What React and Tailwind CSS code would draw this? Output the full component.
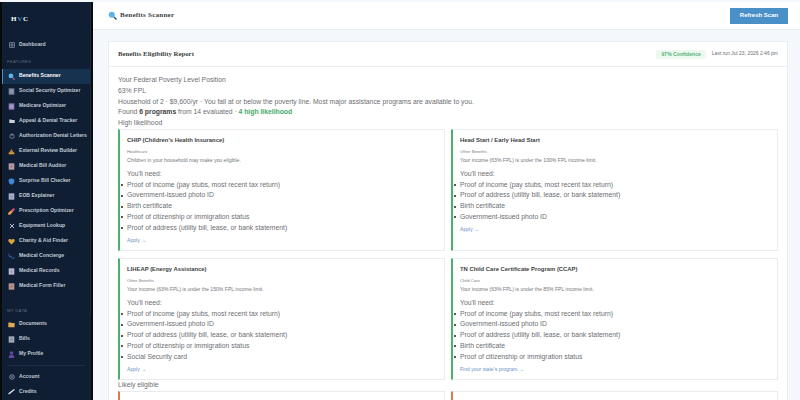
const SANS = "font-['Liberation_Sans',Arial,sans-serif]";

const Box = ({ fill, line }) => (
    <svg viewBox="0 0 10 10" className="w-[7px] h-[7px]">
        <rect x="1" y="0.5" width="8" height="9" fill={fill} />
        <path d="M2.5 3h5M2.5 5h5M2.5 7h5" stroke={line} strokeWidth="0.8" />
    </svg>
);

const icons = {
    grid: (
        <svg viewBox="0 0 10 10" className="w-[6px] h-[6px]" fill="none" stroke="#aab4c0" strokeWidth="1">
            <path d="M1 1h8v8H1zM1 5h8M5 1v8" />
        </svg>
    ),
    search: (
        <svg viewBox="0 0 10 10" className="w-[7px] h-[7px]">
            <circle cx="4.2" cy="4.2" r="3.4" fill="#5fb4e8" />
            <path d="M6.6 6.6 9.4 9.4" stroke="#c46bb0" strokeWidth="1.6" />
        </svg>
    ),
    chart: <Box fill="#77839a" line="#a3adbc" />,
    clipboard: <Box fill="#8d78b5" line="#c9bedc" />,
    folder: (
        <svg viewBox="0 0 10 10" className="w-[6px] h-[6px]">
            <path d="M0.5 2.5h3.5l1 1h4.5v5h-9z" fill="#c9d1da" />
        </svg>
    ),
    power: (
        <svg viewBox="0 0 10 10" className="w-[6px] h-[6px]" fill="none" stroke="#aab4c0" strokeWidth="1">
            <circle cx="5" cy="5.5" r="3.6" />
            <path d="M5 1v4" />
        </svg>
    ),
    scale: (
        <svg viewBox="0 0 10 10" className="w-[7px] h-[7px]">
            <path d="M1 7.5 5 1l4 6.5z" fill="#a8783c" />
            <rect x="1" y="6.5" width="8" height="2.5" fill="#d39a3e" />
        </svg>
    ),
    bill: <Box fill="#c5a3ad" line="#7d6a78" />,
    shield: (
        <svg viewBox="0 0 10 10" className="w-[7px] h-[7px]">
            <path d="M5 0.5 9 2v3.5C9 7.5 7 9 5 9.7 3 9 1 7.5 1 5.5V2z" fill="#3f86d6" />
        </svg>
    ),
    page: <Box fill="#aeb4d0" line="#8089a8" />,
    pill: (
        <svg viewBox="0 0 10 10" className="w-[7px] h-[7px]">
            <path d="M2 8 8 2" stroke="#d8527c" strokeWidth="3.2" strokeLinecap="round" />
            <path d="M2 8 4.5 5.5" stroke="#e2a03f" strokeWidth="3.2" strokeLinecap="round" />
        </svg>
    ),
    tools: (
        <svg viewBox="0 0 10 10" className="w-[6px] h-[6px]" fill="none" stroke="#c4ccd6" strokeWidth="1.6">
            <path d="M1.5 1.5 8.5 8.5M8.5 1.5 1.5 8.5" />
        </svg>
    ),
    heart: (
        <svg viewBox="0 0 10 10" className="w-[7px] h-[7px]">
            <path d="M5 9.2 1 5.2C-0.4 3.4 1 1.2 3 1.5c1 .1 1.6.7 2 1.3.4-.6 1-1.2 2-1.3 2-.3 3.4 1.9 2 3.7z" fill="#e0a23a" />
        </svg>
    ),
    steth: (
        <svg viewBox="0 0 10 10" className="w-[7px] h-[7px]" fill="none" stroke="#3f6fd0" strokeWidth="1.1">
            <path d="M1.5 1v3c0 2 3 2 3 0M4.5 4.5c0 4 4 4.5 4 1.5" />
        </svg>
    ),
    records: <Box fill="#c0bcd8" line="#8f8bb0" />,
    form: <Box fill="#c49a94" line="#7c6a6a" />,
    docs: (
        <svg viewBox="0 0 10 10" className="w-[7px] h-[7px]">
            <path d="M0.5 2h3.5l1 1h4.5v6h-9z" fill="#e0aa4e" />
        </svg>
    ),
    bills: <Box fill="#a9b0bf" line="#707a8c" />,
    profile: (
        <svg viewBox="0 0 10 10" className="w-[7px] h-[7px]">
            <circle cx="5" cy="3" r="2.5" fill="#66479c" />
            <path d="M1 10c0-3.5 1.8-4.5 4-4.5S9 6.5 9 10z" fill="#66479c" />
        </svg>
    ),
    gear: (
        <svg viewBox="0 0 10 10" className="w-[6px] h-[6px]" fill="none" stroke="#aab4c0" strokeWidth="1.2">
            <circle cx="5" cy="5" r="3.8" />
            <path d="M3.5 3.5l3 3M6.5 3.5l-3 3" strokeWidth="0.8" />
        </svg>
    ),
    credit: (
        <svg viewBox="0 0 10 10" className="w-[7px] h-[7px]">
            <path d="M1.5 8 8.5 2.5" stroke="#d5dbe2" strokeWidth="2" strokeLinecap="round" />
        </svg>
    ),
};

const NavItem = ({ icon, label, active }) => (
    <div className={`flex items-center h-[15px] text-[5.1px] font-bold ${active ? 'pl-[2px] mr-[1px] bg-[#16324f] text-white border-l border-[#3f8fd0]' : 'pl-[3px] text-[#c3ccd6]'}`}>
        <span className="w-[13px] flex justify-center shrink-0">{icons[icon]}</span>
        <span className="ml-[1px] whitespace-nowrap">{label}</span>
    </div>
);

const features = [
    ['search', 'Benefits Scanner', true],
    ['chart', 'Social Security Optimizer'],
    ['clipboard', 'Medicare Optimizer'],
    ['folder', 'Appeal & Denial Tracker'],
    ['power', 'Authorization Denial Letters'],
    ['scale', 'External Review Builder'],
    ['bill', 'Medical Bill Auditor'],
    ['shield', 'Surprise Bill Checker'],
    ['page', 'EOB Explainer'],
    ['pill', 'Prescription Optimizer'],
    ['tools', 'Equipment Lookup'],
    ['heart', 'Charity & Aid Finder'],
    ['steth', 'Medical Concierge'],
    ['records', 'Medical Records'],
    ['form', 'Medical Form Filler'],
];

const Sidebar = () => (
    <aside className={`${SANS} relative w-[93px] shrink-0 h-[398px] mt-[2px] bg-[#0f1e33] border-x-2 border-[#0a0a0a] overflow-hidden`}>
        <div className="h-[35px] pt-[13px] pl-[9px] font-['Liberation_Serif',serif] font-bold text-[7px] leading-[8px] tracking-[0.8px] text-white">
            H<span className="text-[#3f8fd0]">V</span>C
        </div>
        <NavItem icon="grid" label="Dashboard" />
        <div className="h-[16.5px] pt-[7px] pl-[5px] text-[4.2px] leading-[6px] tracking-[0.3px] text-[#5a6a80]">FEATURES</div>
        {features.map(([icon, label, active]) => (
            <NavItem key={label} icon={icon} label={label} active={active} />
        ))}
        <div className="h-[23px] pt-[14.5px] pl-[5px] text-[4.2px] leading-[6px] tracking-[0.3px] text-[#5a6a80]">MY DATA</div>
        <NavItem icon="docs" label="Documents" />
        <NavItem icon="bills" label="Bills" />
        <NavItem icon="profile" label="My Profile" />
        <div className="mx-[5px] mt-[3.5px] mb-[3px] border-t border-[#1d2d43]" />
        <NavItem icon="gear" label="Account" />
        <NavItem icon="credit" label="Credits" />
        {/* scrollbar thumb */}
        <div className="absolute top-0 right-0 w-[1.5px] h-[315px] bg-[#1d2a3e]" />
    </aside>
);

const ProgramCard = ({ title, category, reason, docs, link = 'Apply →' }) => (
    <div className="h-[122px] bg-white border border-[#e8ebf0] border-l-2 border-l-[#4caf6e] pl-[7px] pt-[6px]">
        <div className="text-[5.9px] leading-[9px] font-bold text-[#3d3f44]">{title}</div>
        <div className="mt-[2px] text-[4.2px] leading-[9px] text-[#7c7e84]">{category}</div>
        <div className="text-[5.1px] leading-[9px] text-[#73757a]">{reason}</div>
        <div className="mt-[3.4px] text-[6.8px] leading-[10.8px] text-[#6c6e73]">You'll need:</div>
        <ul className="text-[6.8px] leading-[10.8px] text-[#6c6e73]">
            {docs.map(doc => (
                <li key={doc} className="flex items-center">
                    <span className="w-[2px] h-[2px] -ml-[6.5px] mr-[4.5px] rounded-full bg-[#222]"></span>
                    {doc}
                </li>
            ))}
        </ul>
        <div className="mt-[1.3px] text-[5.1px] leading-[10px] text-[#6a92c4]">{link}</div>
    </div>
);

const INCOME = 'Proof of income (pay stubs, most recent tax return)';
const ADDRESS = 'Proof of address (utility bill, lease, or bank statement)';
const PHOTO = 'Government-issued photo ID';
const BIRTH = 'Birth certificate';
const CITIZEN = 'Proof of citizenship or immigration status';

export default function App() {
    return (
        <div className={`${SANS} flex w-[800px] h-[400px] overflow-hidden bg-[#f4f7fb]`}>
            <Sidebar />
            <main className="flex-1 min-w-0">
                <header className="h-[28px] mt-[2px] flex items-center justify-between bg-white border-b border-[#e8ebf0] pl-[15px] pr-[12px]">
                    <div className="flex items-center gap-[3px]">
                        <svg viewBox="0 0 10 10" className="w-[9px] h-[9px]">
                            <circle cx="4.2" cy="4.2" r="3.4" fill="#5fb4e8" />
                            <path d="M6.6 6.6 9.4 9.4" stroke="#33506e" strokeWidth="1.6" />
                        </svg>
                        <span className="font-['Liberation_Serif',serif] font-bold text-[7.1px] text-[#3d3f44] tracking-[0.2px]">Benefits Scanner</span>
                    </div>
                    <button className="w-[58px] h-[16px] bg-[#4a90c8] text-white text-[6px] font-bold">Refresh Scan</button>
                </header>
                <section className="ml-[15px] mr-[12px] mt-[11px] bg-white border border-[#e9edf3]">
                    <div className="h-[25px] flex items-center justify-between border-b border-[#e8ebf0] pl-[9px] pr-[9px]">
                        <span className="font-['Liberation_Serif',serif] font-bold text-[6.8px] text-[#3d3f44]">Benefits Eligibility Report</span>
                        <div className="flex items-center gap-[6px]">
                            <span className="h-[9px] px-[5px] rounded-[2px] bg-[#edf9f0] text-[5.1px] leading-[9px] font-bold text-[#55b377]">97% Confidence</span>
                            <span className="text-[5px] text-[#6c6e73]">Last run Jul 23, 2026 2:46 pm</span>
                        </div>
                    </div>
                    <div className="px-[9px] pt-[8px] text-[6.8px] leading-[10.8px] text-[#6c6e73]">
                        <div>Your Federal Poverty Level Position</div>
                        <div>63% FPL</div>
                        <div>Household of 2 · $9,600/yr · You fall at or below the poverty line. Most major assistance programs are available to you.</div>
                        <div>
                            Found <b className="text-[#3d3f44]">6 programs</b> from 14 evaluated · <b className="text-[#3fa968]">4 high likelihood</b>
                        </div>
                        <div>High likelihood</div>
                        <div className="grid grid-cols-2 gap-x-[6px] gap-y-[7px] mt-[0.5px]">
                            <ProgramCard
                                title="CHIP (Children's Health Insurance)"
                                category="Healthcare"
                                reason="Children in your household may make you eligible."
                                docs={[INCOME, PHOTO, BIRTH, CITIZEN, ADDRESS]}
                            />
                            <ProgramCard
                                title="Head Start / Early Head Start"
                                category="Other Benefits"
                                reason="Your income (63% FPL) is under the 100% FPL income limit."
                                docs={[INCOME, ADDRESS, BIRTH, PHOTO]}
                            />
                            <ProgramCard
                                title="LIHEAP (Energy Assistance)"
                                category="Other Benefits"
                                reason="Your income (63% FPL) is under the 150% FPL income limit."
                                docs={[INCOME, PHOTO, ADDRESS, CITIZEN, 'Social Security card']}
                            />
                            <ProgramCard
                                title="TN Child Care Certificate Program (CCAP)"
                                category="Child Care"
                                reason="Your income (63% FPL) is under the 85% FPL income limit."
                                docs={[INCOME, PHOTO, ADDRESS, BIRTH, CITIZEN]}
                                link="Find your state's program →"
                            />
                        </div>
                        <div>Likely eligible</div>
                        <div className="grid grid-cols-2 gap-x-[6px]">
                            <div className="h-[20px] bg-white border border-[#e8ebf0] border-l-2 border-l-[#e0764a]" />
                            <div className="h-[20px] bg-white border border-[#e8ebf0] border-l-2 border-l-[#e0764a]" />
                        </div>
                    </div>
                </section>
            </main>
        </div>
    );
}
